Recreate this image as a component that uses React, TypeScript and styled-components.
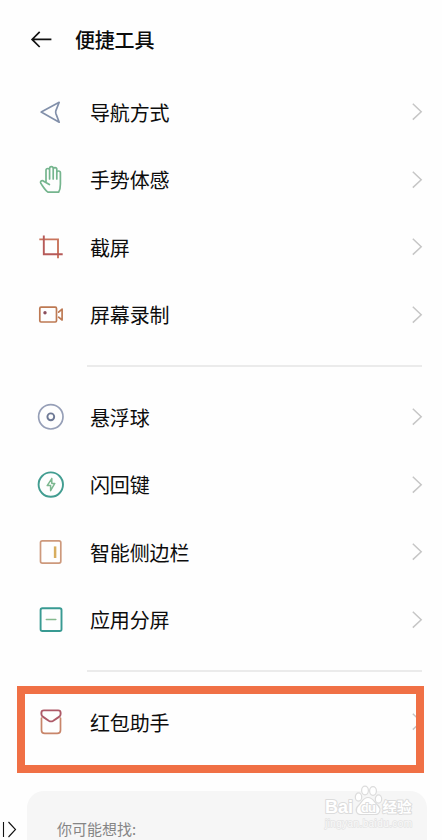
import React from "react";
import styled, { createGlobalStyle } from "styled-components";

const GlobalStyle = createGlobalStyle`
  * { box-sizing: border-box; }
  html, body { margin: 0; padding: 0; background: #fefefe; overflow: hidden; }
`;

const Screen = styled.main`
  position: relative;
  width: 442px;
  height: 840px;
  overflow: hidden;
  display: flex;
  flex-direction: column;
  background: #fefefe;
  color: #0c0c0c;
  font-family: "Noto Sans CJK SC", sans-serif;
`;

const Header = styled.header`
  flex: none;
  height: 78.5px;
  padding: 0 0 0 30px;
  display: flex;
  align-items: center;
`;

const BackIcon = styled.svg`
  width: 22px;
  height: 20px;
  margin-right: 23px;
`;

const Title = styled.h1`
  margin: 0;
  padding-top: 2px;
  font-size: 20px;
  line-height: 28px;
  font-weight: 500;
  letter-spacing: -0.2px;
`;

const Group = styled.section`
  flex: none;
  display: flex;
  flex-direction: column;
`;

const Row = styled.div`
  height: 67.5px;
  padding: 0 17px 0 30px;
  display: flex;
  align-items: center;
`;

const RowIcon = styled.svg`
  flex: none;
  width: 42px;
  height: 42px;
  margin-right: 18px;
  fill: none;
  stroke-width: 1.7;
  stroke-linecap: round;
  stroke-linejoin: round;
`;

const Label = styled.span`
  flex: 1;
  padding-top: 1px;
  font-size: 20px;
  line-height: 28px;
  letter-spacing: -0.15px;
`;

const Chevron = styled.svg`
  flex: none;
  width: 14px;
  height: 20px;
  fill: none;
  stroke: #c6c6c6;
  stroke-width: 1.5;
`;

const Divider = styled.hr`
  flex: none;
  width: 335px;
  height: 1.5px;
  margin: 16.5px 0 17px 87px;
  border: 0;
  background: #ebebeb;
`;

const Highlight = styled.div`
  position: absolute;
  left: 17px;
  top: 686px;
  width: 407px;
  height: 87px;
  border: 8px solid #f07045;
`;

const Suggestions = styled.section`
  flex: none;
  height: 70px;
  margin: 35px 15px 0 27px;
  padding: 27px 0 0 30px;
  border-radius: 17px;
  background: #f6f6f6;
  color: #858585;
  font-size: 15px;
  line-height: 22px;
`;

const EdgeMark = styled.svg`
  position: absolute;
  left: 0;
  top: 820px;
  width: 18px;
  height: 18px;
  fill: none;
  stroke: #111;
  stroke-width: 1.1;
`;

const Watermark = styled.svg`
  position: absolute;
  left: 320px;
  top: 782px;
  width: 100px;
  height: 48px;
  fill: #fff;
  stroke: #dcdcdc;
  stroke-width: 1.2;
  stroke-linejoin: round;
`;

const WatermarkText = styled.text<{ $size: number; $cjk?: boolean }>`
  font-family: ${(p) => (p.$cjk ? '"Noto Sans CJK SC"' : '"Liberation Sans"')}, sans-serif;
  font-size: ${(p) => p.$size}px;
  font-weight: 700;
  paint-order: stroke;
  stroke-width: 2px;
`;

const WatermarkUrl = styled.text`
  font-family: "Liberation Sans", sans-serif;
  font-size: 10px;
  fill: #f9f9f9;
  stroke: #e4e4e4;
  stroke-width: 1.4px;
  paint-order: stroke;
`;

type Item = { label: string; icon: React.ReactNode };

const mainItems: Item[] = [
  {
    label: "导航方式",
    icon: <path stroke="#8290aa" d="M11.2 21.1 29.2 11.3 25.9 19.6Q25.4 21.1 25.9 22.6L29.2 31.2Z" />,
  },
  {
    label: "手势体感",
    icon: (
      <path
        stroke="#75b58e"
        d="M16 23V11.3a1.8 1.8 0 0 1 3.6 0V20 M19.6 11V9.5a1.8 1.8 0 0 1 3.6 0V20 M23.2 10.5a1.8 1.8 0 0 1 3.6 0V20 M26.8 13.8a1.8 1.8 0 0 1 3.6 0V25C30.4 28.5 29.9 31.2 28.6 33.2H18.2C15.2 31.5 13 27.4 10.8 24.3C9.8 22.6 11.5 21.2 13.2 21.9L19.4 25.6"
      />
    ),
  },
  {
    label: "截屏",
    icon: (
      <g strokeLinecap="butt" strokeLinejoin="miter" strokeWidth={1.9}>
        <path stroke="#c9745c" d="M9.3 13.4H28V32.2" />
        <path stroke="#b65a58" d="M13.8 9.4V28.2H32.7" />
      </g>
    ),
  },
  {
    label: "屏幕录制",
    icon: (
      <g stroke="#bd7953">
        <rect x="9.8" y="13.2" width="16.7" height="14.8" rx="1.2" />
        <path d="M28.6 18.1 32.1 15.1V26L28.6 23.2" />
        <circle cx="15" cy="18.8" r="1.7" fill="#8b4f5c" stroke="none" />
      </g>
    ),
  },
];

const toolItems: Item[] = [
  {
    label: "悬浮球",
    icon: (
      <>
        <circle cx="20.8" cy="20.8" r="12.2" stroke="#969fb7" />
        <circle cx="20.8" cy="20.8" r="3.4" stroke="#6e7995" strokeWidth={1.9} />
      </>
    ),
  },
  {
    label: "闪回键",
    icon: (
      <>
        <circle cx="20.8" cy="20.6" r="12.2" stroke="#429d91" strokeWidth={1.9} />
        <path
          stroke="#7cb78f"
          strokeWidth={1.5}
          d="M21.8 14.6 17.2 21.6H20.6V26.6 M21.8 14.6V19.4H24.8L20.6 26.6"
        />
      </>
    ),
  },
  {
    label: "智能侧边栏",
    icon: (
      <>
        <rect x="10.5" y="9.8" width="20.3" height="22.3" rx="1.8" stroke="#cd997c" />
        <path stroke="#d7ad5e" strokeWidth={2.5} strokeLinecap="butt" d="M25.1 15.4V27" />
      </>
    ),
  },
  {
    label: "应用分屏",
    icon: (
      <>
        <rect x="10.6" y="9.3" width="20.9" height="22.7" rx="1.8" stroke="#389a92" strokeWidth={1.9} />
        <path stroke="#85b98e" strokeWidth={1.5} d="M16.3 20.6H25.8" />
      </>
    ),
  },
];

const assistantItems: Item[] = [
  {
    label: "红包助手",
    icon: (
      <>
        <path stroke="#c8856a" d="M11.5 17.2V29.2Q11.5 32.4 14.7 32.4H27.3Q30.5 32.4 30.5 29.2V17.2" />
        <path
          stroke="#ad5967"
          strokeWidth={1.9}
          d="M14 9.4H28.1Q30.6 9.4 30.6 11.8V13Q30.6 14.8 29 15.9L23.3 19.7Q21 21.1 18.7 19.7L13.1 15.9Q11.4 14.8 11.4 13V11.8Q11.4 9.4 14 9.4Z"
        />
      </>
    ),
  },
];

function ToolGroup({ items }: { items: Item[] }) {
  return (
    <Group>
      {items.map((item) => (
        <Row key={item.label}>
          <RowIcon viewBox="0 0 42 42">{item.icon}</RowIcon>
          <Label>{item.label}</Label>
          <Chevron viewBox="0 0 14 20">
            <path d="M1.8 1.8 10.2 9.7 1.8 17.6" />
          </Chevron>
        </Row>
      ))}
    </Group>
  );
}

export default function App() {
  return (
    <>
      <GlobalStyle />
      <Screen>
        <Header>
          <BackIcon viewBox="0 0 22 20" fill="none" stroke="#111" strokeWidth="1.7">
            <path d="M9.7 2.8 2.1 10.4 9.7 18 M2.1 10.4H21.4" />
          </BackIcon>
          <Title>便捷工具</Title>
        </Header>
        <ToolGroup items={mainItems} />
        <Divider />
        <ToolGroup items={toolItems} />
        <Divider />
        <ToolGroup items={assistantItems} />
        <Suggestions>你可能想找:</Suggestions>
        <Highlight />
        <EdgeMark viewBox="0 0 18 18">
          <path d="M3.5 2V17 M8.5 2 15.5 9.5 8.5 17" />
        </EdgeMark>
        <Watermark viewBox="0 0 100 48">
          <WatermarkText $size={18} x="5" y="30.5" textLength="28" lengthAdjust="spacingAndGlyphs">Bai</WatermarkText>
          <ellipse cx="38.5" cy="15" rx="3.2" ry="4.2" />
          <ellipse cx="45" cy="8.5" rx="3.4" ry="4.3" />
          <ellipse cx="53" cy="9" rx="3.4" ry="4.3" />
          <ellipse cx="58.5" cy="17" rx="3.2" ry="4.2" />
          <path d="M48 15.5C43 15.5 42 20 38.5 23.5C34.5 27 36 32.5 41 32.5H55C60 32.5 61.5 27 58 23.5C54 20 53 15.5 48 15.5Z" />
          <WatermarkText $size={13} x="41" y="29.5" textLength="15">du</WatermarkText>
          <WatermarkText $size={14} $cjk x="62.5" y="30" textLength="29" lengthAdjust="spacingAndGlyphs">经验</WatermarkText>
          <WatermarkUrl x="5" y="44.5" textLength="87">jingyan.baidu.com</WatermarkUrl>
        </Watermark>
      </Screen>
    </>
  );
}
